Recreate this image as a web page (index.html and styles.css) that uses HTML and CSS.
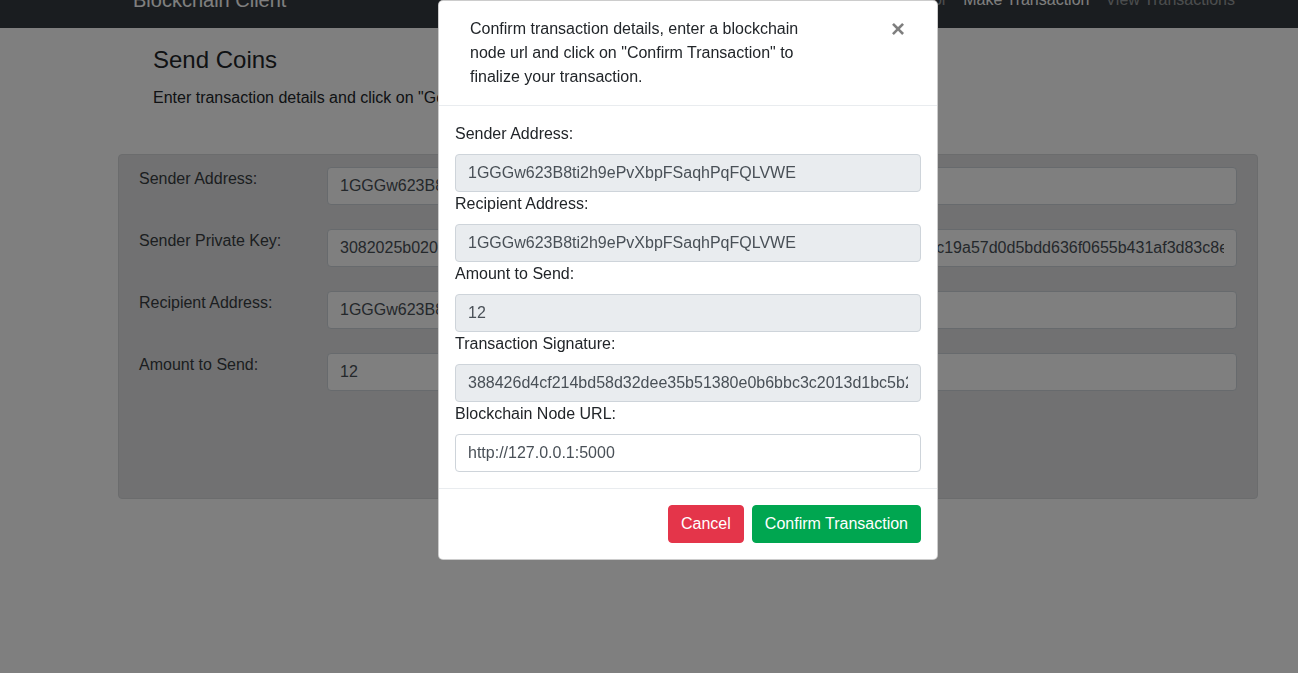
FILE: index.html
```html
<!DOCTYPE html>
<html lang="en">
<head>
<meta charset="utf-8">
<title>Blockchain Client</title>
<link rel="stylesheet" href="styles.css">
</head>
<body>
<div class="frame">
  <nav class="navbar">
    <div class="container nav-inner">
      <span class="brand">Blockchain Client</span>
      <ul class="nav-links">
        <li><a class="nav-link">Wallet Generator</a></li>
        <li><a class="nav-link active">Make Transaction</a></li>
        <li><a class="nav-link">View Transactions</a></li>
      </ul>
    </div>
  </nav>

  <div class="container">
    <div class="head-body">
      <h4 class="title">Send Coins</h4>
      <p class="lead-text">Enter transaction details and click on "Generate Transaction" button to generate your transaction</p>
    </div>
  </div>

  <div class="container panel">
    <form class="tx-form">
      <div class="frow">
        <label class="flabel">Sender Address:</label>
        <input class="input" type="text" value="1GGGw623B8ti2h9ePvXbpFSaqhPqFQLVWE">
      </div>
      <div class="frow">
        <label class="flabel">Sender Private Key:</label>
        <input class="input" type="text" value="3082025b02010002818100b5e8d2a7b3e9d4a1b6e2d8a3b7e4d9a2b5e1d6a8b3e7dc19a57d0d5bdd636f0655b431af3d83c8e5b2a9d7e3b1a4d6e8b2a5d9e3b7a1d4e6b8a2d5">
      </div>
      <div class="frow">
        <label class="flabel">Recipient Address:</label>
        <input class="input" type="text" value="1GGGw623B8ti2h9ePvXbpFSaqhPqFQLVWE">
      </div>
      <div class="frow">
        <label class="flabel">Amount to Send:</label>
        <input class="input" type="text" value="12">
      </div>
      <div class="btn-row">
        <button type="button" class="btn btn-primary btn-lg">Generate Transaction</button>
      </div>
    </form>
  </div>
</div>

<div class="backdrop"></div>

<div class="modal">
  <div class="modal-content">
    <div class="modal-header">
      <div class="header-text">Confirm transaction details, enter a blockchain node url and click on "Confirm Transaction" to finalize your transaction.</div>
      <button type="button" class="close">&times;</button>
    </div>
    <div class="modal-body">
      <label class="mlabel">Sender Address:</label>
      <input class="input readonly" type="text" readonly value="1GGGw623B8ti2h9ePvXbpFSaqhPqFQLVWE">
      <label class="mlabel">Recipient Address:</label>
      <input class="input readonly" type="text" readonly value="1GGGw623B8ti2h9ePvXbpFSaqhPqFQLVWE">
      <label class="mlabel">Amount to Send:</label>
      <input class="input readonly" type="text" readonly value="12">
      <label class="mlabel">Transaction Signature:</label>
      <input class="input readonly" type="text" readonly value="388426d4cf214bd58d32dee35b51380e0b6bbc3c2013d1bc5b2a7e9d4b1c3a8e6d2f5b7a9c1e3d5f7a9b2c4d6e8">
      <label class="mlabel">Blockchain Node URL:</label>
      <input class="input" type="text" value="http://127.0.0.1:5000">
    </div>
    <div class="modal-footer">
      <button type="button" class="btn btn-danger">Cancel</button>
      <button type="button" class="btn btn-success">Confirm Transaction</button>
    </div>
  </div>
</div>
</body>
</html>
```

FILE: styles.css
```css
html, body {
  margin: 0;
  padding: 0;
  overflow: hidden;
}

body {
  font-family: "Liberation Sans", Arial, Helvetica, sans-serif;
  font-size: 16px;
  line-height: 1.5;
  color: #212529;
  background: #fff;
}

* {
  box-sizing: border-box;
}

.frame {
  width: 1376px;
  margin-top: -28px;
}

.container {
  max-width: 1140px;
  margin: 0 auto;
  padding: 0 15px;
}

/* navbar */
.navbar {
  background: #343a40;
  height: 56px;
  padding: 8px 16px;
}

.nav-inner {
  display: flex;
  align-items: center;
  justify-content: space-between;
  height: 40px;
}

.brand {
  font-size: 20px;
  line-height: 30px;
  padding: 5px 0;
  color: #fff;
  white-space: nowrap;
}

.nav-links {
  display: flex;
  list-style: none;
  margin: 0;
  padding: 0;
}

.nav-link {
  display: block;
  padding: 8px;
  color: rgba(255, 255, 255, 0.5);
  text-decoration: none;
}

.nav-link.active {
  color: #fff;
}

/* heading */
.head-body {
  padding: 18px 20px 0;
}

.title {
  font-size: 24px;
  font-weight: 500;
  line-height: 1.2;
  margin: 0 0 11px;
}

.lead-text {
  margin: 0 0 44px;
}

/* form panel */
.panel {
  background: #e2e3e5;
  border: 1px solid #d6d8db;
  border-radius: 4px;
  padding: 12px 20px;
  color: #383d41;
}

.tx-form {
  display: flex;
  flex-direction: column;
  gap: 24px;
  padding-bottom: 23px;
}

.frow {
  display: grid;
  grid-template-columns: 158px 1fr;
  column-gap: 30px;
  align-items: start;
}

.flabel {
  display: block;
  line-height: 24px;
}

.input {
  display: block;
  width: 100%;
  height: 38px;
  padding: 6px 12px;
  font-family: inherit;
  font-size: 16px;
  line-height: 24px;
  color: #495057;
  background: #fff;
  border: 1px solid #ced4da;
  border-radius: 4px;
  outline: none;
}

.input.readonly {
  background: #e9ecef;
}

.btn-row {
  display: flex;
  justify-content: center;
}

.btn {
  font-family: inherit;
  font-size: 16px;
  line-height: 24px;
  padding: 6px 12px;
  border: 1px solid transparent;
  border-radius: 4px;
  color: #fff;
  cursor: pointer;
}

.btn-lg {
  font-size: 20px;
  line-height: 30px;
  padding: 8px 16px;
  border-radius: 5px;
}

.btn-primary {
  background: #007bff;
  border-color: #007bff;
}

.btn-danger {
  background: #e4354a;
  border-color: #e4354a;
}

.btn-success {
  background: #00a650;
  border-color: #00a650;
}

/* overlay + modal */
.backdrop {
  position: fixed;
  top: 0;
  left: 0;
  right: 0;
  bottom: 0;
  background: rgba(0, 0, 0, 0.5);
}

.modal {
  position: fixed;
  top: 0;
  left: 0;
  width: 1376px;
  bottom: 0;
}

.modal-content {
  width: 500px;
  margin: 0 auto;
  background: #fff;
  border: 1px solid rgba(0, 0, 0, 0.2);
  border-radius: 5px;
}

.modal-header {
  display: flex;
  align-items: flex-start;
  padding: 16px;
  border-bottom: 1px solid #e9ecef;
}

.header-text {
  width: 365px;
  padding-left: 15px;
}

.close {
  margin: -16px 0 -16px auto;
  padding: 16px;
  background: transparent;
  border: 0;
  font-family: inherit;
  font-size: 24px;
  font-weight: 700;
  line-height: 1;
  color: #000;
  opacity: 0.5;
  text-shadow: 0 1px 0 #fff;
  cursor: pointer;
}

.modal-body {
  padding: 16px;
}

.mlabel {
  display: block;
  line-height: 24px;
  margin-bottom: 8px;
}

.modal-footer {
  display: flex;
  justify-content: flex-end;
  gap: 8px;
  padding: 16px;
  border-top: 1px solid #e9ecef;
}
```
